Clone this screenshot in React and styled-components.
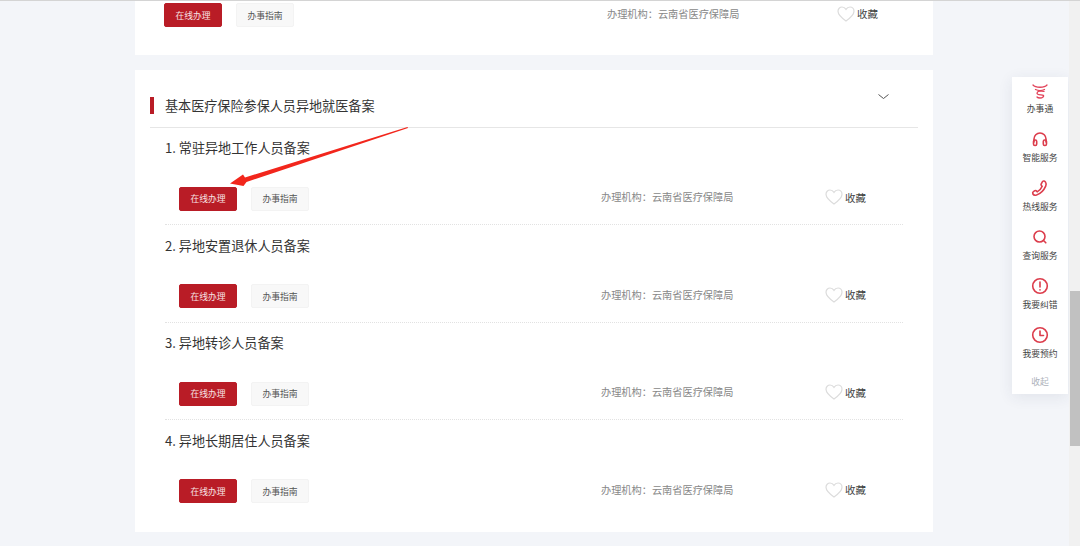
import React from 'react';
import styled, { createGlobalStyle } from 'styled-components';

const FONT = '"Noto Sans CJK SC", "Liberation Sans", sans-serif';
const RED = '#b91c26';
const ICON_RED = '#dc3d4c';

const GlobalStyle = createGlobalStyle`
  html, body {
    margin: 0;
    padding: 0;
    height: 100%;
    overflow: hidden;
    background: #f3f5f9;
    font-family: ${FONT};
  }
`;

const Page = styled.div`
  position: relative;
  width: 1080px;
  height: 546px;
  overflow: hidden;
  border-top: 1px solid #d4d4d4;
  box-sizing: border-box;
  background: #f3f5f9;
`;

const Column = styled.main`
  width: 798px;
  margin-left: 135px;
  display: flex;
  flex-direction: column;
  gap: 15px;
`;

const Card = styled.section`
  background: #fff;
  box-sizing: border-box;
  height: ${(p) => p.$height}px;
  padding: ${(p) => p.$padding};
`;

const SectionHeader = styled.header`
  display: flex;
  align-items: center;
  justify-content: space-between;
  height: 58px;
  padding: 0 29px 0 0;
  border-bottom: 1px solid #e6e6e6;
  box-sizing: border-box;
`;

const SectionTitle = styled.h2`
  margin: 14px 0 0;
  padding-left: 11px;
  height: 17px;
  line-height: 17px;
  border-left: 4px solid ${RED};
  font-size: 13.1px;
  font-weight: 400;
  color: #333;
`;

const Chevron = styled.svg`
  width: 11px;
  height: 6px;
  margin-top: -4px;
  fill: none;
  stroke: #555;
  stroke-width: 1;
`;

const RowList = styled.div`
  padding: 0 15px;
`;

const Row = styled.article`
  box-sizing: border-box;
  height: 97.4px;
  padding-top: 10.4px;
  border-bottom: ${(p) => (p.$last ? 'none' : '1px dotted #e2e2e2')};
`;

const RowTitle = styled.h3`
  margin: 0;
  height: 20px;
  line-height: 20px;
  font-size: 13.1px;
  font-weight: 400;
  color: #333;
`;

const RowBody = styled.div`
  display: flex;
  align-items: center;
  margin-top: ${(p) => p.$top}px;
  padding-left: ${(p) => p.$indent}px;
  height: 24px;
`;

const Button = styled.span`
  box-sizing: border-box;
  display: flex;
  align-items: center;
  justify-content: center;
  width: 58px;
  height: 24px;
  margin-right: 14px;
  border-radius: 2px;
  font-size: 8.8px;
  color: ${(p) => (p.$primary ? '#f7e3e4' : '#555')};
  background: ${(p) => (p.$primary ? RED : '#f8f8f8')};
  border: 1px solid ${(p) => (p.$primary ? RED : '#f3f3f3')};
`;

const Agency = styled.span`
  margin-left: ${(p) => p.$left}px;
  margin-bottom: 4px;
  width: ${(p) => p.$width}px;
  font-size: 10.2px;
  color: #888;
  white-space: nowrap;
`;

const Favorite = styled.span`
  display: flex;
  align-items: center;
  gap: 2px;
  margin-bottom: 3px;
  font-size: 10.5px;
  color: #444;
`;

const Heart = styled.svg`
  width: 18px;
  height: 16px;
  fill: none;
  stroke: #dcdcdc;
  stroke-width: 1.2;
`;

const ArrowOverlay = styled.svg`
  position: absolute;
  left: 0;
  top: -1px;
  width: 1080px;
  height: 546px;
  pointer-events: none;
`;

const Dock = styled.aside`
  position: absolute;
  left: 1012px;
  top: 76px;
  width: 56px;
  height: 317px;
  padding-top: 3px;
  box-sizing: border-box;
  background: #fff;
  display: flex;
  flex-direction: column;
  align-items: center;
  box-shadow: 0 3px 14px rgba(40, 50, 90, 0.09);
`;

const DockItem = styled.div`
  display: flex;
  flex-direction: column;
  align-items: center;
  height: 49px;
`;

const DockIcon = styled.svg`
  width: 18px;
  height: 18px;
  margin-top: 1px;
  fill: none;
  stroke: ${ICON_RED};
  stroke-width: 1.6;
  stroke-linecap: round;
  stroke-linejoin: round;
`;

const DockLabel = styled.span`
  margin-top: 3px;
  line-height: 13px;
  font-size: 8.8px;
  color: #444;
  white-space: nowrap;
`;

const DockCollapse = styled.span`
  margin-top: 1px;
  line-height: 13px;
  font-size: 8.8px;
  color: #aeb3bb;
`;

const ScrollTrack = styled.div`
  position: absolute;
  right: 0;
  top: 0;
  bottom: 0;
  width: 11px;
  background: #f1f1f1;
`;

const ScrollThumb = styled.div`
  margin-top: 290px;
  height: 155px;
  margin-left: 1px;
  background: #c1c1c1;
`;

const dockItems = [
  {
    label: '办事通',
    icon: (
      <g strokeWidth="1.3" stroke="#e2435a" transform="translate(0 2)">
        <path d="M2 2c2.500 3 11.500 3 14 0" />
        <path d="M4.500 6.500c2.500 1.200 6.500 1.200 9 0" />
        <path d="M13 8.300c-3-.6-7-.2-7 1.900s5 1.400 6.300 2.200c1 .7-.6 2.600-3.300 2.600-1.500 0-2.500-.4-3-1" />
      </g>
    ),
  },
  {
    label: '智能服务',
    icon: (
      <>
        <path d="M3 12V9a6 6 0 0 1 12 0v3" />
        <rect x="2.500" y="10" width="3.200" height="5.500" rx="1.400" />
        <rect x="12.300" y="10" width="3.200" height="5.500" rx="1.400" />
      </>
    ),
  },
  {
    label: '热线服务',
    icon: (
      <path d="M11.500 2.500c1-.8 2.200-.6 3 .6.8 1.200 1 2.300.2 4C13 11 9 14.800 5.500 16c-1.700.5-3 .1-3.600-1-.5-1-.3-1.700.5-2.300l1.500-1c.7-.4 1.300-.2 1.800.5l.5.7c2.400-1.300 4-3.200 5-5.600l-.7-.6c-.6-.6-.7-1.200-.2-1.900z" />
    ),
  },
  {
    label: '查询服务',
    icon: (
      <>
        <circle cx="8.500" cy="8.500" r="5.500" />
        <path d="M12.500 12.500l2.300 2.300" />
      </>
    ),
  },
  {
    label: '我要纠错',
    icon: (
      <>
        <circle cx="9" cy="9" r="7.300" />
        <path d="M9 5v5" />
        <path d="M9 12.800v.2" />
      </>
    ),
  },
  {
    label: '我要预约',
    icon: (
      <>
        <circle cx="9" cy="9" r="7.300" />
        <path d="M9 5v4.500h3.500" />
      </>
    ),
  },
];

const rows = [
  { title: '1. 常驻异地工作人员备案' },
  { title: '2. 异地安置退休人员备案' },
  { title: '3. 异地转诊人员备案' },
  { title: '4. 异地长期居住人员备案' },
];

const HeartIcon = () => (
  <Heart viewBox="0 0 18 16">
    <path d="M9 15C4 11.500 1 8.800 1 5.300 1 2.900 2.800 1 5 1c1.700 0 3.100.9 4 2.400C9.900 1.900 11.300 1 13 1c2.200 0 4 1.900 4 4.300 0 3.500-3 6.200-8 9.700z" />
  </Heart>
);

const Actions = () => (
  <>
    <Button $primary>在线办理</Button>
    <Button>办事指南</Button>
  </>
);

export default function App() {
  return (
    <Page>
      <GlobalStyle />
      <Column>
        <Card $height={54} $padding="2px 0 0 29px">
          <RowBody $top={0} $indent={0}>
            <Actions />
            <Agency $left={299} $width={230}>办理机构：云南省医疗保障局</Agency>
            <Favorite>
              <HeartIcon />
              收藏
            </Favorite>
          </RowBody>
        </Card>
        <Card $height={462} $padding="0 15px">
          <SectionHeader>
            <SectionTitle>基本医疗保险参保人员异地就医备案</SectionTitle>
            <Chevron viewBox="0 0 11 6">
              <path d="M.5.5l5 4 5-4" />
            </Chevron>
          </SectionHeader>
          <RowList>
            {rows.map((row, i) => (
              <Row key={row.title} $last={i === rows.length - 1}>
                <RowTitle>{row.title}</RowTitle>
                <RowBody $top={28.6} $indent={14}>
                  <Actions />
                  <Agency $left={278} $width={224}>办理机构：云南省医疗保障局</Agency>
                  <Favorite>
                    <HeartIcon />
                    收藏
                  </Favorite>
                </RowBody>
              </Row>
            ))}
          </RowList>
        </Card>
      </Column>
      <ArrowOverlay viewBox="0 0 1080 546">
        <polygon points="407.500,127 245,177.500 243,174.500 230,183.500 243.500,186 246.500,182 408,128" fill="#f2261c" />
      </ArrowOverlay>
      <Dock>
        {dockItems.map((item) => (
          <DockItem key={item.label}>
            <DockIcon viewBox="0 0 18 18">{item.icon}</DockIcon>
            <DockLabel>{item.label}</DockLabel>
          </DockItem>
        ))}
        <DockCollapse>收起</DockCollapse>
      </Dock>
      <ScrollTrack>
        <ScrollThumb />
      </ScrollTrack>
    </Page>
  );
}
